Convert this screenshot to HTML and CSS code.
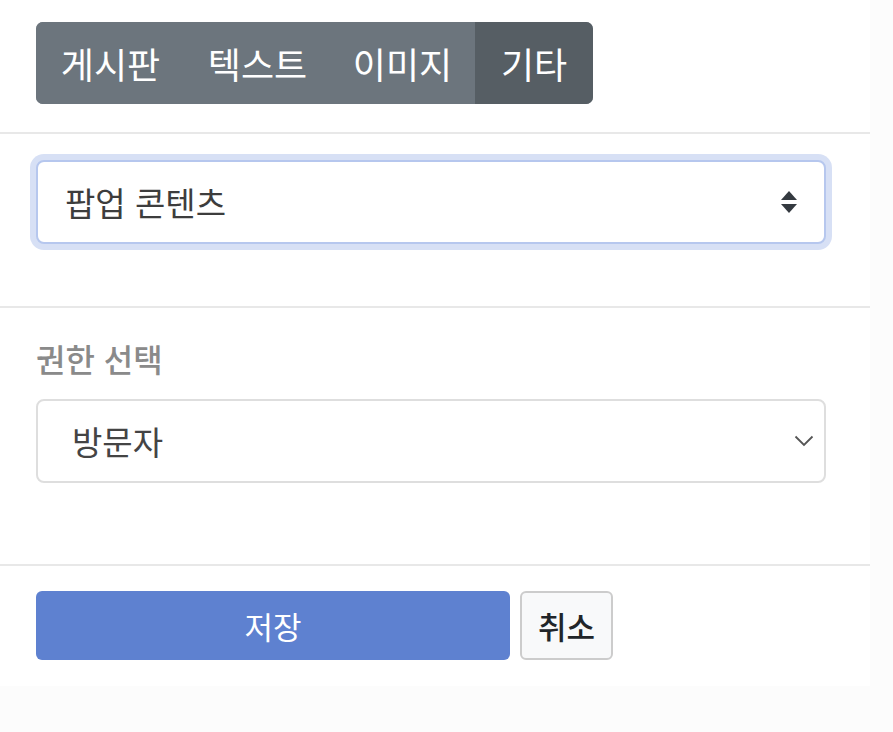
FILE: index.html
```html
<!DOCTYPE html>
<html lang="ko">
<head>
<meta charset="utf-8">
<link rel="stylesheet" href="styles.css">
</head>
<body>
<div class="panel">
  <div class="section top">
    <div class="btn-group">
      <button class="seg w149">게시판</button>
      <button class="seg w145">텍스트</button>
      <button class="seg w145">이미지</button>
      <button class="seg active">기타</button>
    </div>
  </div>
  <div class="divider"></div>
  <div class="section s2">
    <div class="select focused">
      <span class="val">팝업 콘텐츠</span>
      <svg class="updown" width="18" height="24" viewBox="0 0 18 24"><path d="M9 1 L17 10 H1 Z" fill="#343a40"/><path d="M1 14 H17 L9 23 Z" fill="#343a40"/></svg>
    </div>
  </div>
  <div class="divider"></div>
  <div class="section s3">
    <div class="label">권한 선택</div>
    <div class="select plain">
      <span class="val">방문자</span>
      <svg class="chev" width="20" height="12" viewBox="0 0 20 12"><path d="M1.5 1.5 L10 10 L18.5 1.5" fill="none" stroke="#555" stroke-width="1.8"/></svg>
    </div>
  </div>
  <div class="divider"></div>
  <div class="section s4">
    <button class="btn save">저장</button>
    <button class="btn cancel">취소</button>
  </div>
</div>
</body>
</html>
```

FILE: styles.css
```css
html, body {
  margin: 0;
  padding: 0;
  background: #fcfcfc;
  font-family: "Noto Sans CJK KR", "Noto Sans", sans-serif;
}
.panel {
  width: 870px;
  height: 686px;
  background: #fff;
  display: flex;
  flex-direction: column;
}
.section {
  padding-left: 36px;
  padding-right: 44px;
}
.top {
  padding-top: 22px;
  padding-bottom: 28px;
}
.divider {
  height: 2px;
  background: #e8e8e8;
}
.btn-group {
  display: inline-flex;
  height: 82px;
  border-radius: 7px;
  overflow: hidden;
  background: #6c757d;
}
.seg {
  border: 0;
  margin: 0;
  background: #6c757d;
  color: #fff;
  font-family: inherit;
  font-size: 36px;
  padding: 0;
  line-height: 1;
  text-align: center;
}
.w149 { width: 149px; }
.w145 { width: 145px; }
.seg.active {
  width: 118px;
  background: #565e64;
}
.s2 {
  padding-top: 26px;
  padding-bottom: 62px;
}
.select {
  box-sizing: border-box;
  height: 84px;
  border-radius: 8px;
  border: 2px solid #dedede;
  background: #fff;
  display: flex;
  align-items: center;
  justify-content: space-between;
  font-size: 33px;
  color: #444;
}
.select.focused {
  border-color: #b6c7ee;
  box-shadow: 0 0 0 6px #d7e0f5;
  padding: 0 26px 0 27px;
  color: #3d3d3d;
}
.select.plain {
  padding: 0 10px 0 34px;
}
.s3 {
  padding-top: 28px;
  padding-bottom: 81px;
}
.label {
  font-size: 32px;
  line-height: 44px;
  color: #8a8a8a;
  font-weight: 500;
  margin-bottom: 19px;
}
.s4 {
  padding-top: 25px;
  display: flex;
  gap: 10px;
}
.btn {
  height: 69px;
  border-radius: 6px;
  font-family: inherit;
  font-size: 31px;
  margin: 0;
}
.save {
  width: 474px;
  background: #5e81d0;
  border: 0;
  color: #fff;
}
.cancel {
  width: 93px;
  background: #f8f9fa;
  border: 2px solid #cccccc;
  color: #212529;
  font-weight: 500;
  padding: 0;
}
```
